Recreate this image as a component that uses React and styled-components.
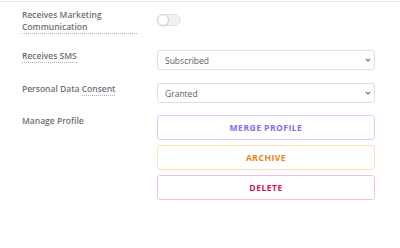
import React from 'react';
import styled, { createGlobalStyle } from 'styled-components';

const GlobalStyle = createGlobalStyle`
  body {
    margin: 0;
    background: #fff;
    font-family: "Open Sans", "Liberation Sans", sans-serif;
  }
`;

const Panel = styled.section`
  margin-top: 1px;
  border-top: 1px solid #e3e7ed;
  padding: 7px 25px 0 22px;
  display: flex;
  flex-direction: column;
`;

const Row = styled.div`
  display: grid;
  grid-template-columns: 135px 218px;
  align-items: start;
  margin-bottom: ${(p) => p.$space || 13}px;
`;

const Label = styled.div`
  font-size: 8.5px;
  font-weight: 600;
  line-height: 12px;
  color: #6c6f77;
  padding-right: 20px;
`;

const Hint = styled.span`
  display: ${(p) => (p.$block ? 'block' : 'inline-block')};
  border-bottom: 1px dotted #aab0b8;
  line-height: 12px;
`;

const Toggle = styled.div`
  margin-top: 5px;
  width: 24px;
  height: 12px;
  border-radius: 6px;
  background: #f1f1f3;
  border: 1px solid #e2e2e5;
  box-sizing: border-box;
  position: relative;
`;

const Knob = styled.span`
  position: absolute;
  left: -1px;
  top: -1px;
  width: 12px;
  height: 12px;
  border-radius: 50%;
  background: #fff;
  border: 1px solid #cfcfd3;
  box-sizing: border-box;
  box-shadow: 0 1px 1px rgba(0, 0, 0, 0.08);
`;

const SelectWrap = styled.div`
  position: relative;
  width: 218px;
  height: 20px;
`;

const Select = styled.select`
  display: block;
  appearance: none;
  width: 100%;
  height: 20px;
  margin: 0;
  box-sizing: border-box;
  border: 1px solid #dedfe2;
  border-radius: 3px;
  background: #fff;
  padding: 0 20px 0 7px;
  font-family: "Open Sans", "Liberation Sans", sans-serif;
  font-size: 8.5px;
  color: #5a5d63;
  outline: none;
`;

const Chevron = styled.svg`
  position: absolute;
  right: 4px;
  top: 8px;
  pointer-events: none;
`;

const Actions = styled.div`
  display: flex;
  flex-direction: column;
  gap: 5px;
`;

const tones = {
  merge: { border: '#d5d0fb', text: '#776ff0' },
  archive: { border: '#f9ddbc', text: '#e8840f' },
  delete: { border: '#f3c2d3', text: '#d0135a' },
};

const ActionButton = styled.button`
  height: 25px;
  width: 218px;
  box-sizing: border-box;
  background: #fff;
  border: 1px solid ${(p) => tones[p.$tone].border};
  border-radius: 3px;
  color: ${(p) => tones[p.$tone].text};
  font-family: "Open Sans", "Liberation Sans", sans-serif;
  font-size: 8.5px;
  font-weight: 700;
  letter-spacing: 0.5px;
  text-transform: uppercase;
  cursor: pointer;
`;

function Dropdown({ value, options }) {
  return (
    <SelectWrap>
      <Select defaultValue={value}>
        {options.map((o) => (
          <option key={o}>{o}</option>
        ))}
      </Select>
      <Chevron width="6" height="4" viewBox="0 0 6 4">
        <path d="M0.8 0.8 L3 3 L5.2 0.8" fill="none" stroke="#6b6e74" strokeWidth="1.1" />
      </Chevron>
    </SelectWrap>
  );
}

export default function App() {
  return (
    <>
      <GlobalStyle />
      <Panel>
        <Row $space={16}>
          <Label>
            <Hint $block>Receives Marketing Communication</Hint>
          </Label>
          <Toggle>
            <Knob />
          </Toggle>
        </Row>
        <Row>
          <Label>
            <Hint>Receives SMS</Hint>
          </Label>
          <Dropdown value="Subscribed" options={['Subscribed', 'Unsubscribed']} />
        </Row>
        <Row $space={12}>
          <Label>
            Personal Data <Hint>Consent</Hint>
          </Label>
          <Dropdown value="Granted" options={['Granted', 'Denied']} />
        </Row>
        <Row>
          <Label>Manage Profile</Label>
          <Actions>
            <ActionButton $tone="merge">Merge Profile</ActionButton>
            <ActionButton $tone="archive">Archive</ActionButton>
            <ActionButton $tone="delete">Delete</ActionButton>
          </Actions>
        </Row>
      </Panel>
    </>
  );
}
